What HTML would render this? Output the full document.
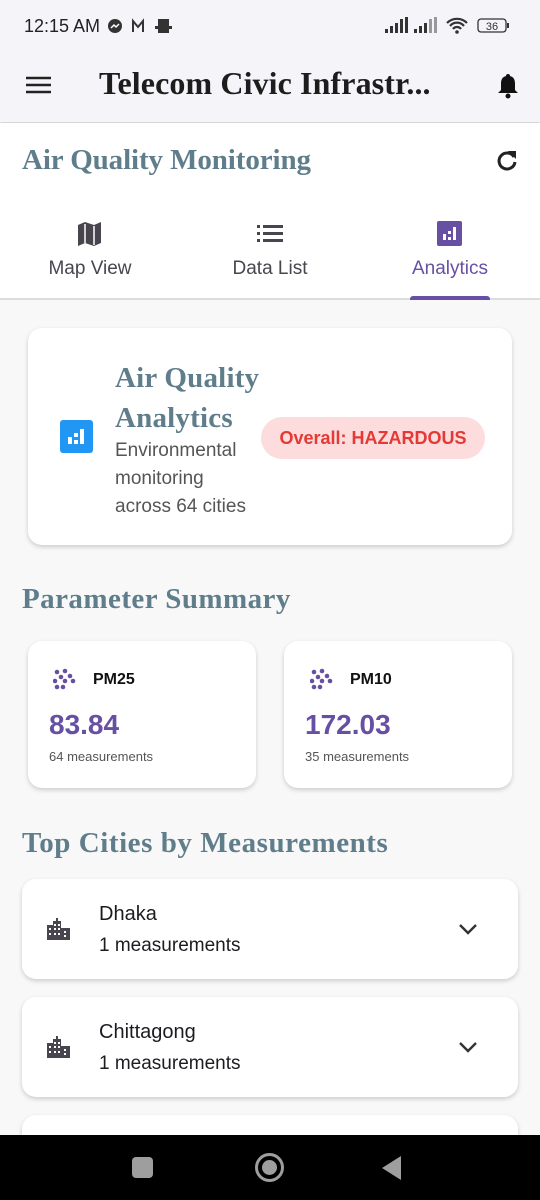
<!DOCTYPE html>
<html><head><meta charset="utf-8"><style>
*{margin:0;padding:0;box-sizing:border-box}
html,body{width:540px;height:1200px;overflow:hidden}
body{background:#f8f8f8;font-family:"Liberation Sans",sans-serif;position:relative}
.abs{position:absolute}
.serif{font-family:"Liberation Serif",serif;font-weight:bold;white-space:nowrap}
.card{position:absolute;background:#fff;border-radius:14px;box-shadow:0 2px 5px rgba(0,0,0,.18)}
</style></head><body>
<div class="abs" style="left:0;top:0;width:540px;height:122px;background:#f5f4f9;box-shadow:0 1px 2px rgba(0,0,0,.2)"></div>
<div class="abs" style="left:24px;top:16px;font-size:18px;color:#222">12:15 AM</div>
<svg class="abs" style="left:108px;top:18px" width="70" height="18"><circle cx="7" cy="8" r="7" fill="#333"/><path d="M3 10l3-3 2 2 3-3" stroke="#fff" stroke-width="1.5" fill="none"/><path d="M25 14V3l5 6 5-6v11" stroke="#333" stroke-width="2" fill="none"/><rect x="50" y="1" width="11" height="14" fill="#333"/><rect x="47" y="8" width="17" height="3" fill="#333"/></svg>
<svg class="abs" style="left:385px;top:16px" width="130" height="20"><g fill="#333"><rect x="0" y="13" width="3" height="4"/><rect x="5" y="10" width="3" height="7"/><rect x="10" y="7" width="3" height="10"/><rect x="15" y="3" width="3" height="14"/><rect x="20" y="1" width="3" height="16"/><rect x="29" y="13" width="3" height="4"/><rect x="34" y="10" width="3" height="7"/><rect x="39" y="7" width="3" height="10"/><rect x="44" y="3" width="3" height="14" fill="#999"/><rect x="49" y="1" width="3" height="16" fill="#999"/></g><path d="M62 7a14 14 0 0 1 20 0M65 10a9 9 0 0 1 14 0M68 13a5 5 0 0 1 8 0" stroke="#333" stroke-width="2.2" fill="none"/><circle cx="72" cy="16" r="1.8" fill="#333"/><rect x="93" y="3" width="28" height="13" rx="3" stroke="#333" stroke-width="1.3" fill="none"/><rect x="122" y="7" width="2" height="5" fill="#333"/><text x="107" y="14" font-size="11" text-anchor="middle" fill="#333" font-family="Liberation Sans">36</text></svg>
<svg class="abs" style="left:26px;top:76px" width="26" height="20"><path d="M0 2h25M0 9h25M0 16h25" stroke="#222" stroke-width="2.6"/></svg>
<div class="abs serif" style="left:99px;top:65px;font-size:32px;color:#1d1d1d;letter-spacing:0.1px">Telecom Civic Infrastr...</div>
<svg class="abs" style="left:496px;top:72px" width="24" height="28"><path d="M12 2c-1.5 0-2 1-2 2C6 5 5 8 5 12v6l-3 3h20l-3-3v-6c0-4-1-7-5-8 0-1-.5-2-2-2z" fill="#111"/><circle cx="12" cy="24" r="2.5" fill="#111"/></svg>
<div class="abs" style="left:0;top:123px;width:540px;height:176px;background:#fff"></div>
<div class="abs serif" style="left:22px;top:144px;font-size:29px;color:#5f7d8a;letter-spacing:-0.1px">Air Quality Monitoring</div>
<svg class="abs" style="left:495px;top:148px" width="24" height="24"><path d="M19 9A8 8 0 1 0 20 14" stroke="#222" stroke-width="3" fill="none"/><path d="M13 3h8v8z" fill="#222"/></svg>
<svg class="abs" style="left:77px;top:221px" width="26" height="26"><path d="M1 4l7-3 9 3 7-3v21l-7 3-9-3-7 3z" fill="#49454f"/><path d="M8 3v19M17 5v19" stroke="#fff" stroke-width="1.5"/></svg>
<svg class="abs" style="left:257px;top:224px" width="26" height="20"><g fill="#49454f"><rect x="0" y="1" width="3" height="3"/><rect x="0" y="8" width="3" height="3"/><rect x="0" y="15" width="3" height="3"/><rect x="6" y="1" width="20" height="3"/><rect x="6" y="8" width="20" height="3"/><rect x="6" y="15" width="20" height="3"/></g></svg>
<svg class="abs" style="left:437px;top:221px" width="26" height="26"><rect width="25" height="25" rx="2" fill="#6750a4"/><g fill="#fff"><rect x="6" y="13" width="3" height="6"/><rect x="11" y="10" width="3" height="3"/><rect x="11" y="16" width="3" height="3"/><rect x="16" y="6" width="3" height="13"/></g></svg>
<div class="abs" style="left:0;top:258px;width:180px;text-align:center;font-size:19px;color:#49454f">Map View</div>
<div class="abs" style="left:180px;top:258px;width:180px;text-align:center;font-size:19px;color:#49454f">Data List</div>
<div class="abs" style="left:360px;top:258px;width:180px;text-align:center;font-size:19px;color:#6750a4">Analytics</div>
<div class="abs" style="left:0;top:298px;width:540px;height:2px;background:#ddd"></div>
<div class="abs" style="left:410px;top:296px;width:80px;height:4px;background:#6750a4;border-radius:3px 3px 0 0"></div>

<div class="card" style="left:28px;top:328px;width:484px;height:217px"></div>
<svg class="abs" style="left:60px;top:420px" width="34" height="34"><rect width="33" height="33" rx="3" fill="#2196f3"/><g fill="#fff"><rect x="8" y="17" width="4" height="7"/><rect x="14" y="13" width="4" height="4"/><rect x="14" y="20" width="4" height="4"/><rect x="20" y="9" width="4" height="15"/></g></svg>
<div class="abs serif" style="left:115px;top:358px;font-size:29px;line-height:40px;color:#5f7d8a;letter-spacing:0.2px">Air Quality<br>Analytics</div>
<div class="abs" style="left:115px;top:437px;font-size:19px;line-height:28px;color:#555">Environmental<br>monitoring<br>across 64 cities</div>
<div class="abs" style="left:261px;top:417px;width:224px;height:42px;border-radius:21px;background:#fcdcdc;color:#e53935;font-weight:bold;font-size:18px;text-align:center;line-height:42px">Overall: HAZARDOUS</div>

<div class="abs serif" style="left:22px;top:583px;font-size:29px;color:#5f7d8a;letter-spacing:0.45px">Parameter Summary</div>
<div class="card" style="left:28px;top:641px;width:228px;height:147px"></div>
<div class="card" style="left:284px;top:641px;width:228px;height:147px"></div>
<svg class="abs" style="left:53px;top:668px" width="24" height="24"><g fill="#6750a4"><circle cx="4" cy="4" r="2.3"/><circle cx="12" cy="3" r="2.3"/><circle cx="8" cy="9" r="2.3"/><circle cx="17" cy="8" r="2.3"/><circle cx="2" cy="13" r="2.3"/><circle cx="12" cy="13" r="2.3"/><circle cx="20" cy="13" r="2.3"/><circle cx="4" cy="19" r="2.3"/><circle cx="10" cy="19" r="2.3"/></g></svg>
<svg class="abs" style="left:310px;top:668px" width="24" height="24"><g fill="#6750a4"><circle cx="4" cy="4" r="2.3"/><circle cx="12" cy="3" r="2.3"/><circle cx="8" cy="9" r="2.3"/><circle cx="17" cy="8" r="2.3"/><circle cx="2" cy="13" r="2.3"/><circle cx="12" cy="13" r="2.3"/><circle cx="20" cy="13" r="2.3"/><circle cx="4" cy="19" r="2.3"/><circle cx="10" cy="19" r="2.3"/></g></svg>
<div class="abs" style="left:93px;top:671px;font-size:16px;font-weight:bold;color:#111">PM25</div>
<div class="abs" style="left:350px;top:671px;font-size:16px;font-weight:bold;color:#111">PM10</div>
<div class="abs" style="left:49px;top:709px;font-size:28px;font-weight:bold;color:#6750a4">83.84</div>
<div class="abs" style="left:305px;top:709px;font-size:28px;font-weight:bold;color:#6750a4">172.03</div>
<div class="abs" style="left:49px;top:749px;font-size:13px;color:#555">64 measurements</div>
<div class="abs" style="left:305px;top:749px;font-size:13px;color:#555">35 measurements</div>

<div class="abs serif" style="left:22px;top:827px;font-size:29px;color:#5f7d8a;letter-spacing:0.55px">Top Cities by Measurements</div>
<div class="card" style="left:22px;top:879px;width:496px;height:100px"></div>
<div class="card" style="left:22px;top:997px;width:496px;height:100px"></div>
<div class="card" style="left:22px;top:1115px;width:496px;height:40px"></div>
<svg class="abs" style="left:46px;top:916px" width="26" height="26"><path d="M1 24V9h6V5h3V2h2v3h3v7h9v12z" fill="#49454f"/><g fill="#fff"><rect x="3" y="12" width="2" height="2"/><rect x="3" y="17" width="2" height="2"/><rect x="8" y="8" width="2" height="2"/><rect x="8" y="12" width="2" height="2"/><rect x="8" y="17" width="2" height="2"/><rect x="12" y="8" width="2" height="2"/><rect x="12" y="12" width="2" height="2"/><rect x="12" y="17" width="2" height="2"/><rect x="18" y="15" width="2" height="2"/><rect x="18" y="19" width="2" height="2"/></g></svg>
<svg class="abs" style="left:46px;top:1034px" width="26" height="26"><path d="M1 24V9h6V5h3V2h2v3h3v7h9v12z" fill="#49454f"/><g fill="#fff"><rect x="3" y="12" width="2" height="2"/><rect x="3" y="17" width="2" height="2"/><rect x="8" y="8" width="2" height="2"/><rect x="8" y="12" width="2" height="2"/><rect x="8" y="17" width="2" height="2"/><rect x="12" y="8" width="2" height="2"/><rect x="12" y="12" width="2" height="2"/><rect x="12" y="17" width="2" height="2"/><rect x="18" y="15" width="2" height="2"/><rect x="18" y="19" width="2" height="2"/></g></svg>
<div class="abs" style="left:99px;top:903px;font-size:20px;color:#1d1b20">Dhaka</div>
<div class="abs" style="left:99px;top:935px;font-size:19px;color:#1d1b20">1 measurements</div>
<div class="abs" style="left:99px;top:1021px;font-size:20px;color:#1d1b20">Chittagong</div>
<div class="abs" style="left:99px;top:1053px;font-size:19px;color:#1d1b20">1 measurements</div>
<svg class="abs" style="left:458px;top:922px" width="20" height="14"><path d="M2 3l8 8 8-8" stroke="#333" stroke-width="2.4" fill="none"/></svg>
<svg class="abs" style="left:458px;top:1040px" width="20" height="14"><path d="M2 3l8 8 8-8" stroke="#333" stroke-width="2.4" fill="none"/></svg>

<div class="abs" style="left:0;top:1135px;width:540px;height:65px;background:#000"></div>
<div class="abs" style="left:132px;top:1157px;width:21px;height:21px;border-radius:4px;background:#9e9e9e"></div>
<div class="abs" style="left:255px;top:1153px;width:29px;height:29px;border-radius:50%;border:3px solid #9e9e9e"><div style="margin:4px;width:15px;height:15px;border-radius:50%;background:#9e9e9e"></div></div>
<svg class="abs" style="left:380px;top:1154px" width="24" height="28"><path d="M21 2v24L2 14z" fill="#9e9e9e"/></svg>
</body></html>
